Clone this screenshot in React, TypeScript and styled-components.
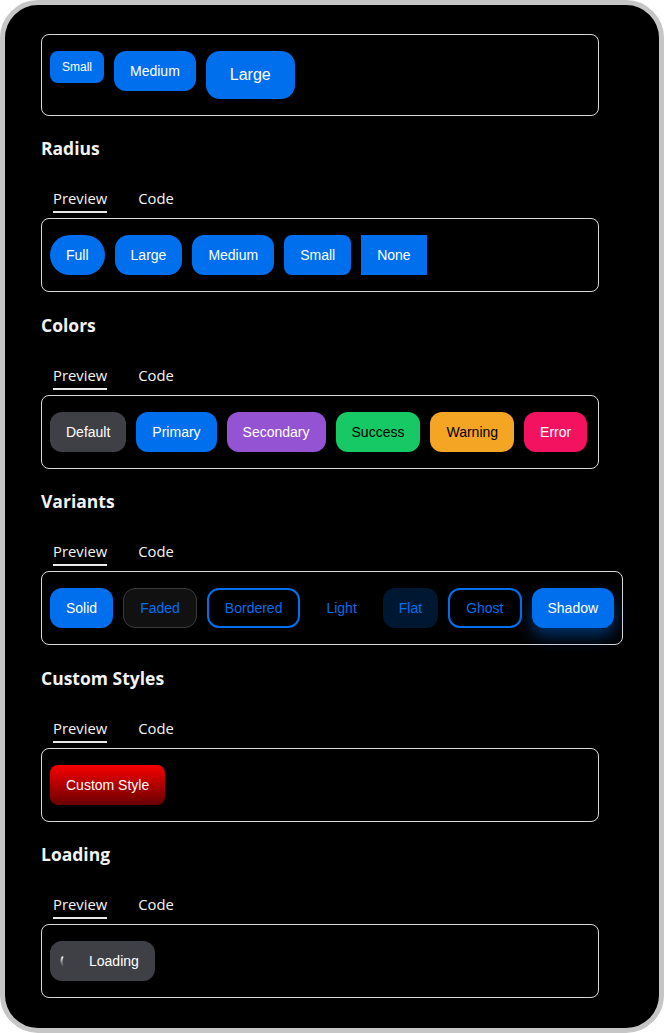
import * as React from 'react';
import styled, { createGlobalStyle, css } from 'styled-components';

const GlobalStyle = createGlobalStyle`
  html, body {
    margin: 0;
    padding: 0;
    background: #ffffff;
  }
`;

const Frame = styled.div`
  box-sizing: border-box;
  width: 664px;
  height: 1033px;
  border: 5px solid #c6c6c6;
  border-radius: 38px;
  background: #000;
  padding: 29px 36px;
  overflow: hidden;
`;

const Column = styled.div`
  width: 558px;
  display: flex;
  flex-direction: column;
`;

const Title = styled.h3`
  margin: 20.5px 0 0;
  font-family: 'Open Sans', 'Noto Sans', sans-serif;
  font-weight: 700;
  font-size: 17.5px;
  line-height: 24px;
  color: #f2f2f2;
`;

const TabRow = styled.div`
  display: flex;
  gap: 31px;
  padding-left: 12px;
  margin-top: 28px;
  margin-bottom: 5px;
`;

const Tab = styled.div<{ $active?: boolean }>`
  font-family: 'Open Sans', 'Noto Sans', sans-serif;
  font-size: 14.8px;
  line-height: 20px;
  color: #f4f4f4;
  padding-bottom: 3px;
  border-bottom: 2px solid ${(p) => (p.$active ? '#e8e8e8' : 'transparent')};
`;

const Preview = styled.div`
  box-sizing: border-box;
  min-width: 100%;
  width: max-content;
  border: 1px solid #d8d8d8;
  border-radius: 8px;
  padding: 16px 8px;
  display: flex;
  align-items: flex-start;
  gap: 10px;
`;

const TopPreview = styled(Preview)`
  margin-bottom: -0.5px;
`;

type Size = 'sm' | 'md' | 'lg';
type Tone = 'default' | 'primary' | 'secondary' | 'success' | 'warning' | 'danger';
type Variant = 'solid' | 'faded' | 'bordered' | 'light' | 'flat' | 'ghost' | 'shadow' | 'custom';

const tones: Record<Tone, { bg: string; fg: string }> = {
  default: { bg: '#3f3f46', fg: '#ffffff' },
  primary: { bg: '#006fee', fg: '#ffffff' },
  secondary: { bg: '#9353d3', fg: '#ffffff' },
  success: { bg: '#17c964', fg: '#000000' },
  warning: { bg: '#f5a524', fg: '#000000' },
  danger: { bg: '#f31260', fg: '#ffffff' },
};

const sizes: Record<Size, { h: number; px: number; fs: number; r: number }> = {
  sm: { h: 32, px: 12, fs: 12, r: 8 },
  md: { h: 40, px: 16, fs: 14, r: 12 },
  lg: { h: 48, px: 24, fs: 16, r: 14 },
};

const Button = styled.button<{ $size?: Size; $tone?: Tone; $variant?: Variant; $radius?: number }>`
  box-sizing: border-box;
  display: inline-flex;
  align-items: center;
  justify-content: center;
  gap: 9px;
  border: none;
  font-family: 'Liberation Sans', Arial, sans-serif;
  white-space: nowrap;
  cursor: pointer;
  ${({ $size = 'md', $radius }) => {
    const s = sizes[$size];
    return css`
      height: ${s.h}px;
      padding: 0 ${s.px}px;
      font-size: ${s.fs}px;
      border-radius: ${$radius ?? s.r}px;
    `;
  }}
  ${({ $tone = 'primary', $variant = 'solid' }) => {
    const t = tones[$tone];
    switch ($variant) {
      case 'faded':
        return css`
          background: #111112;
          border: 1px solid #3c3c40;
          color: ${t.bg};
        `;
      case 'bordered':
      case 'ghost':
        return css`
          background: transparent;
          border: 2px solid ${t.bg};
          color: ${t.bg};
        `;
      case 'light':
        return css`
          background: transparent;
          color: ${t.bg};
        `;
      case 'flat':
        return css`
          background: #001731;
          color: ${t.bg};
        `;
      case 'shadow':
        return css`
          background: ${t.bg};
          color: ${t.fg};
          box-shadow: 0 8px 16px rgba(0, 111, 238, 0.45);
        `;
      case 'custom':
        return css`
          background: linear-gradient(180deg, #f70000 0%, #6a0000 100%);
          color: #fff;
          border-radius: 8px;
        `;
      default:
        return css`
          background: ${t.bg};
          color: ${t.fg};
        `;
    }
  }}
`;

const LoadingButton = styled(Button)`
  padding-left: 10px;
`;

const Spinner = () => (
  <svg width="20" height="20" viewBox="0 0 20 20">
    <defs>
      <linearGradient id="spin" x1="0" y1="1" x2="0" y2="0">
        <stop offset="0" stopColor="#fff" stopOpacity="0.1" />
        <stop offset="1" stopColor="#fff" stopOpacity="0.9" />
      </linearGradient>
    </defs>
    <path d="M2.6 14 A8.5 8.5 0 0 1 2.4 6.2" stroke="url(#spin)" strokeWidth="2" fill="none" strokeLinecap="round" />
  </svg>
);

const Tabs = () => (
  <TabRow>
    <Tab $active>Preview</Tab>
    <Tab>Code</Tab>
  </TabRow>
);

const Section = ({ title, children }: { title: string; children: React.ReactNode }) => (
  <>
    <Title>{title}</Title>
    <Tabs />
    <Preview>{children}</Preview>
  </>
);

export default function App() {
  return (
    <>
      <GlobalStyle />
      <Frame>
        <Column>
          <TopPreview>
            <Button $size="sm">Small</Button>
            <Button $size="md">Medium</Button>
            <Button $size="lg">Large</Button>
          </TopPreview>

          <Section title="Radius">
            <Button $radius={9999}>Full</Button>
            <Button $radius={14}>Large</Button>
            <Button $radius={12}>Medium</Button>
            <Button $radius={8}>Small</Button>
            <Button $radius={0}>None</Button>
          </Section>

          <Section title="Colors">
            <Button $tone="default">Default</Button>
            <Button $tone="primary">Primary</Button>
            <Button $tone="secondary">Secondary</Button>
            <Button $tone="success">Success</Button>
            <Button $tone="warning">Warning</Button>
            <Button $tone="danger">Error</Button>
          </Section>

          <Section title="Variants">
            <Button $variant="solid">Solid</Button>
            <Button $variant="faded">Faded</Button>
            <Button $variant="bordered">Bordered</Button>
            <Button $variant="light">Light</Button>
            <Button $variant="flat">Flat</Button>
            <Button $variant="ghost">Ghost</Button>
            <Button $variant="shadow">Shadow</Button>
          </Section>

          <Section title="Custom Styles">
            <Button $variant="custom">Custom Style</Button>
          </Section>

          <Section title="Loading">
            <LoadingButton $tone="default">
              <Spinner />
              Loading
            </LoadingButton>
          </Section>
        </Column>
      </Frame>
    </>
  );
}
